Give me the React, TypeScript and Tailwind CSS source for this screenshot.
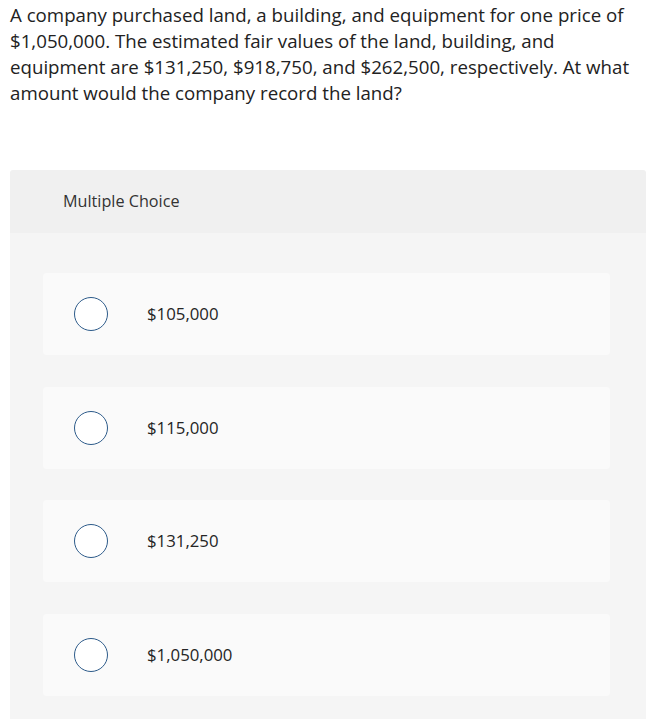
import React from 'react'

const choices = ['$105,000', '$115,000', '$131,250', '$1,050,000']

const App: React.FC = () => {
  return (
    <div className="min-h-screen bg-white font-['Open_Sans','Liberation_Sans',sans-serif] text-[#222]">
      <p className="px-[10px] pt-[2px] text-[18.7px] leading-[26px] text-[#222]">
        A company purchased land, a building, and equipment for one price of
        <br />
        $1,050,000. The estimated fair values of the land, building, and
        <br />
        equipment are $131,250, $918,750, and $262,500, respectively. At what
        <br />
        amount would the company record the land?
      </p>

      <div className="mx-[10px] mt-[64px] w-[636px] overflow-hidden rounded-t-[3px]">
        <div className="flex h-[63px] items-center bg-[#f0f0f0] pl-[53px] text-[16.2px] text-[#333]">
          Multiple Choice
        </div>
        <div className="flex flex-col gap-[31.5px] bg-[#f5f5f5] px-[33px] pt-[40px] pb-[40px]">
          {choices.map((c) => (
            <div key={c} className="flex h-[82px] w-[567px] items-center rounded-[4px] bg-[#fafafa] pl-[31px]">
              <span className="h-[34px] w-[34px] shrink-0 rounded-full border-[1.5px] border-[#2d5b8a] bg-white" />
              <span className="ml-[39px] text-[16.8px] text-[#252525]">{c}</span>
            </div>
          ))}
        </div>
      </div>
    </div>
  )
}

export default App
